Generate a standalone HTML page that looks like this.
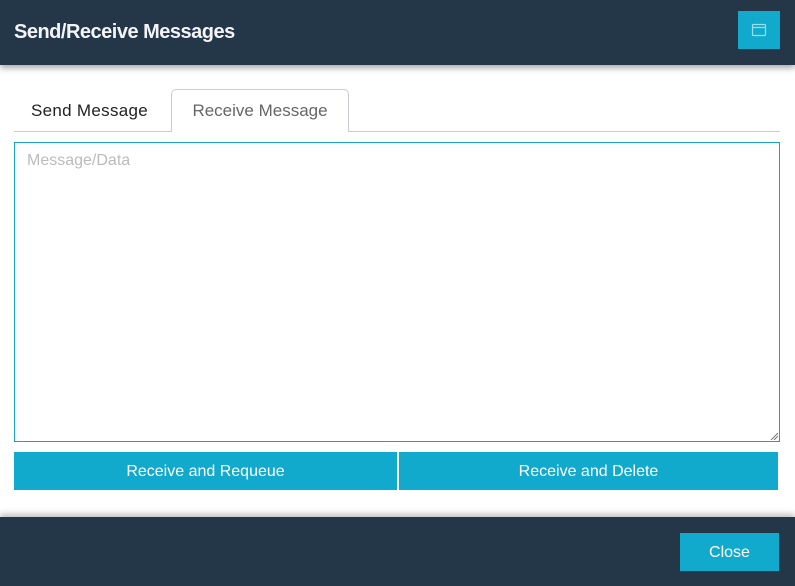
<!DOCTYPE html>
<html><head><style>
*{box-sizing:border-box;margin:0;padding:0}
body{width:795px;height:586px;position:relative;background:#fff;font-family:"Liberation Sans",sans-serif;overflow:hidden}
.hdr{position:absolute;left:0;top:0;width:795px;height:65px;background:#243749;box-shadow:0 3px 6px rgba(0,0,0,.35)}
.hdr h1{position:absolute;left:14px;top:21px;font-size:20px;font-weight:bold;color:#f2f4f6;letter-spacing:-0.5px}
.ib{position:absolute;left:738px;top:11px;width:42px;height:38px;background:#11aacd}
.tabs{position:absolute;left:14px;top:131px;width:766px;height:1px;background:#c8ccd0}
.t1{position:absolute;left:31px;top:101px;font-size:17px;color:#222;letter-spacing:0.3px}
.t2{position:absolute;left:171px;top:89px;width:178px;height:43px;border:1px solid #c8ccd0;border-bottom:none;border-radius:5px 5px 0 0;background:#fff;font-size:17px;color:#666;text-align:center;padding-top:11px}
.ta{position:absolute;left:14px;top:142px;width:766px;height:300px;border:1px solid #1aa3c0}
.ta span{position:absolute;left:12px;top:9px;font-size:16px;color:#bbb}
.b{position:absolute;top:452px;height:38px;background:#11aacd;color:#fff;font-size:16px;text-align:center;line-height:40px}
.ftr{position:absolute;left:0;top:517px;width:795px;height:69px;background:#243749;box-shadow:0 -3px 6px rgba(0,0,0,.25)}
.close{position:absolute;left:680px;top:533px;width:99px;height:38px;background:#11aacd;color:#fff;font-size:16px;text-align:center;line-height:40px}
</style></head><body>
<div class="hdr"><h1>Send/Receive Messages</h1>
<div class="ib"><svg width="42" height="38"><rect x="14.5" y="13.5" width="13" height="11" fill="none" stroke="#9fdcec" stroke-width="1.2" rx="1"/><line x1="14.5" y1="16.5" x2="27.5" y2="16.5" stroke="#9fdcec" stroke-width="1.2"/></svg></div></div>
<div class="tabs"></div>
<div class="t1">Send Message</div>
<div class="t2">Receive Message</div>
<div class="ta"><span>Message/Data</span>
<svg style="position:absolute;right:1px;bottom:1px" width="8" height="8"><line x1="1" y1="8" x2="8" y2="1" stroke="#777"/><line x1="4" y1="8" x2="8" y2="4" stroke="#777"/></svg></div>
<div class="b" style="left:14px;width:383px">Receive and Requeue</div>
<div class="b" style="left:399px;width:379px">Receive and Delete</div>
<div class="ftr"></div>
<div class="close">Close</div>
</body></html>
